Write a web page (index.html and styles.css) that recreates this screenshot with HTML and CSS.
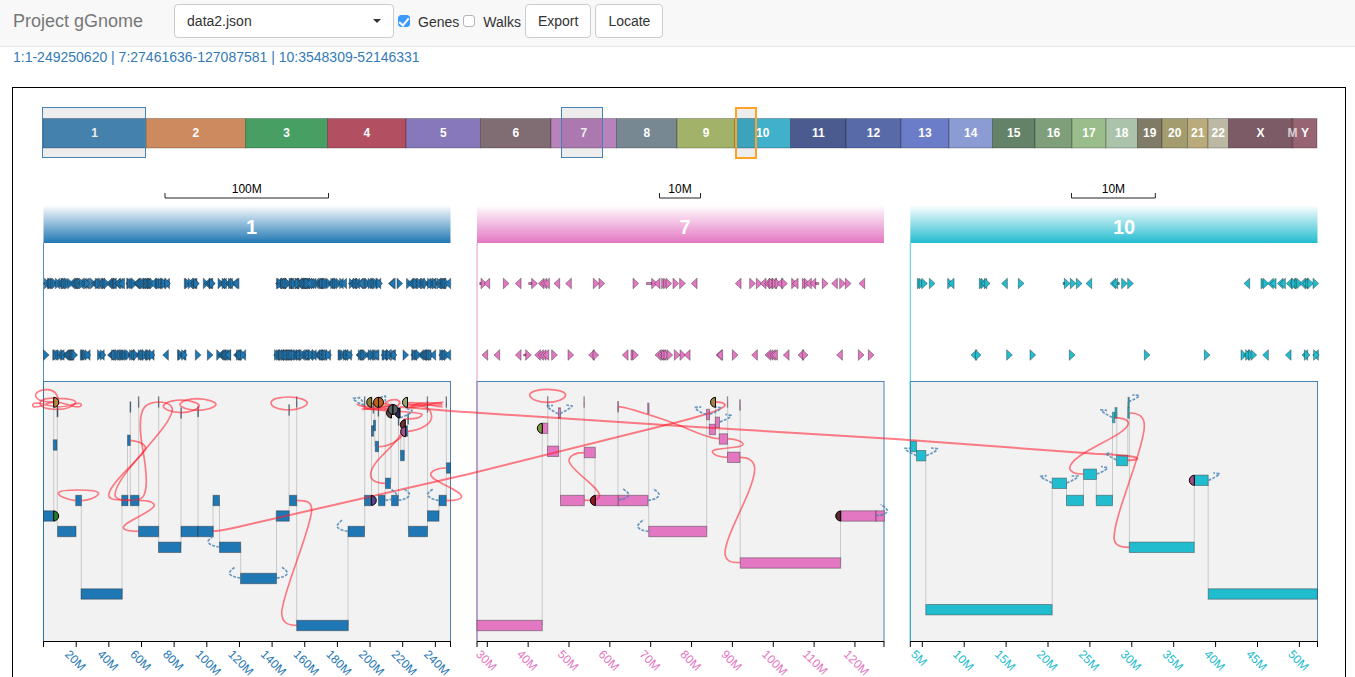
FILE: index.html
```html
<!DOCTYPE html>
<html lang="en">
<head>
<meta charset="utf-8">
<title>Project gGnome</title>
<link rel="stylesheet" href="styles.css">
</head>
<body>
<header class="navbar">
  <a class="brand" href="#">Project gGnome</a>
  <form class="controls">
    <div class="picker">
      <select class="picker-select" aria-label="Data file"><option>data2.json</option></select>
    </div>
    <label class="check"><input class="check-box" type="checkbox" checked>Genes</label>
    <label class="check"><input class="check-box" type="checkbox">Walks</label>
    <button class="btn" type="button">Export</button>
    <button class="btn" type="button">Locate</button>
  </form>
</header>
<main class="content">
  <div class="location"><a class="location-link" href="#">1:1-249250620 | 7:27461636-127087581 | 10:3548309-52146331</a></div>
  <section class="plot">
    <svg class="chart" id="chart" viewBox="13 88 1332 589" preserveAspectRatio="xMinYMin meet" role="img" aria-label="Genome graph">
      <defs>
        <linearGradient id="grad0" x1="0" y1="0" x2="0" y2="1"><stop offset="0" stop-color="#fff"/><stop offset="1" stop-color="#1f77b4"/></linearGradient>
        <linearGradient id="grad1" x1="0" y1="0" x2="0" y2="1"><stop offset="0" stop-color="#fff"/><stop offset="1" stop-color="#e377c2"/></linearGradient>
        <linearGradient id="grad2" x1="0" y1="0" x2="0" y2="1"><stop offset="0" stop-color="#fff"/><stop offset="1" stop-color="#22bccf"/></linearGradient>
      </defs>
    </svg>
  </section>
</main>
<script src="chart.js"></script>
</body>
</html>
```

FILE: styles.css
```css
* { box-sizing: border-box; }
body {
  margin: 0;
  height: 100vh;
  display: flex;
  flex-direction: column;
  overflow: hidden;
  background: #fff;
  color: #333;
  font: 14px/20px "Liberation Sans", Arial, sans-serif;
}
a { text-decoration: none; }
.navbar {
  flex: none;
  display: flex;
  align-items: flex-start;
  padding: 4px 13px 8px;
  gap: 31px;
  background: #f8f8f8;
  border-bottom: 1px solid #e7e7e7;
}
.brand { color: #777; font-size: 18px; line-height: 34px; }
.controls { display: flex; align-items: center; gap: 4px; margin: 0; }
.picker { position: relative; width: 220px; }
.picker::after {
  content: "";
  position: absolute;
  right: 13px;
  top: 15px;
  border: 4px solid transparent;
  border-top-color: #333;
  border-bottom: 0;
  pointer-events: none;
}
.picker-select {
  appearance: none;
  display: block;
  width: 100%;
  height: 34px;
  padding: 0 12px;
  border: 1px solid #ccc;
  border-radius: 4px;
  background: #fff;
  color: #333;
  font: inherit;
}
.check { display: flex; align-items: center; gap: 8px; padding-top: 2px; }
.check-box {
  appearance: none;
  width: 12px;
  height: 12px;
  margin: 0 0 2px;
  border: 1px solid #b5b5b5;
  border-radius: 3px;
  background: #fff;
}
.check-box:checked {
  border-color: #3b99fc;
  background: #3b99fc;
  display: grid;
  place-items: center;
}
.check-box:checked::before {
  content: "";
  width: 4px;
  height: 8px;
  margin-bottom: 2px;
  border: solid #fff;
  border-width: 0 2px 2px 0;
  transform: rotate(40deg);
}
.btn {
  height: 34px;
  padding: 0 12px;
  border: 1px solid #ccc;
  border-radius: 4px;
  background: #fff;
  color: #333;
  font: inherit;
}
.content {
  flex: 1;
  min-height: 0;
  display: flex;
  flex-direction: column;
  padding: 0 9px 0 12px;
}
.location { height: 40px; flex: none; padding-left: 1px; }
.location-link { color: #337ab7; }
.plot {
  flex: 1;
  min-height: 0;
  border: 1px solid #000;
  border-bottom: 0;
  overflow: hidden;
}
.chart { display: block; width: 100%; font-family: "Liberation Sans", Arial, sans-serif; font-size: 12px; }
.band { stroke: #000; stroke-opacity: .25; }
.band-name { fill: #fff; font-weight: bold; text-anchor: middle; }
.brush { fill: #000; fill-opacity: .07; stroke: #4682b4; }
.brush-active { stroke: #ffa226; stroke-width: 2; }
.scale-line { fill: none; stroke: #222; }
.scale-text { fill: #000; text-anchor: middle; }
.title { fill: #fff; font-size: 20px; font-weight: bold; }
.panel { fill: #f2f2f2; stroke: #4682b4; }
.axis { fill: none; stroke: #000; }
.drop { stroke: #000; stroke-opacity: .17; }
.block { stroke: #222; stroke-opacity: .4; }
.gene { stroke: #222; stroke-opacity: .4; }
.cap { stroke: #000; }
.red { fill: none; stroke: #ff2030; stroke-opacity: .58; stroke-width: 5; }
.red-long { fill: none; stroke: #ff2030; stroke-opacity: .58; stroke-width: 2; }
.loose { fill: none; stroke: #4682b4; stroke-opacity: .8; stroke-width: 5; stroke-dasharray: 9 4; }
```

FILE: chart.js
```js
const NS = "http://www.w3.org/2000/svg";
const chart = document.getElementById("chart");
function add(tag, attrs, text, parent = chart) {
  const el = document.createElementNS(NS, tag);
  for (const k in attrs) el.setAttribute(k, attrs[k]);
  if (text) el.textContent = text;
  parent.appendChild(el);
  return el;
}

/* chromosome overview */
const bounds = [43,146,245.5,327.5,406,480.5,551,616.5,677,735,790.5,846,901,949,992.5,1035,1072,1106,1137.5,1162,1187.5,1208,1228.5,1292.3,1292.8,1317];
const names = "1 2 3 4 5 6 7 8 9 10 11 12 13 14 15 16 17 18 19 20 21 22 X M Y".split(" ");
const bandColors = "#4b8bbb #cd8a5e #489f64 #b25062 #8778bb #806c73 #b883bd #788893 #a2b268 #41b0cb #4b5b90 #586ba8 #6b7dc8 #8b9bd3 #648268 #7f9e7a #9bbc8b #abc3ab #807b66 #a29c6e #baab7c #bbb8a3 #7c5a66 #cc6666 #966472".split(" ");
names.forEach((n, i) => add("rect", { class: "band", x: bounds[i], y: 118.5, width: bounds[i + 1] - bounds[i], height: 29.5, fill: bandColors[i] }));
names.forEach((n, i) => add("text", { class: "band-name", x: (bounds[i] + bounds[i + 1]) / 2, y: 137, opacity: n === "M" ? .7 : 1 }, n));
add("rect", { class: "brush", x: 42.5, y: 107.5, width: 103, height: 50 });
add("rect", { class: "brush", x: 561.5, y: 107.5, width: 41, height: 50 });
add("rect", { class: "brush brush-active", x: 736, y: 108, width: 20, height: 50 });

/* panels */
const panels = [
  { name: "1", color: "#1f77b4", x0: 43.5, x1: 450.5, s0: 165, s1: 328.5, scale: "100M", t0: 76.2, step: 32.65, v0: 20, dv: 20, n: 12 },
  { name: "7", color: "#e377c2", x0: 477, x1: 884, s0: 659.5, s1: 700.5, scale: "10M", t0: 487.3, step: 40.85, v0: 30, dv: 10, n: 10 },
  { name: "10", color: "#22bccf", x0: 910.3, x1: 1317.5, s0: 1071.5, s1: 1155.3, scale: "10M", t0: 922.3, step: 41.9, v0: 5, dv: 5, n: 10 }
];
panels.forEach((p, i) => {
  const mid = (p.x0 + p.x1) / 2;
  add("path", { class: "scale-line", d: `M${p.s0} 193V198H${p.s1}V193` });
  add("text", { class: "scale-text", x: (p.s0 + p.s1) / 2, y: 193 }, p.scale);
  add("rect", { x: p.x0, y: 205, width: p.x1 - p.x0, height: 38, fill: `url(#grad${i})` });
  add("text", { class: "title", x: mid - 1, y: 234 }, p.name);
  add("rect", { class: "panel", x: p.x0, y: 381.5, width: p.x1 - p.x0, height: 260 });
  add("path", { d: `M${p.x0} 243V641`, stroke: p.color, "stroke-opacity": .8 });
  let d = `M${p.x0} 647V641.5H${p.x1}V647`;
  for (let k = 0; k < p.n; k++) {
    const x = p.t0 + k * p.step;
    d += `M${x} 641V647`;
    add("text", { transform: `translate(${x - 12} 655) rotate(45)`, fill: p.color }, p.v0 + k * p.dv + "M");
  }
  add("path", { class: "axis", d });
});

/* genes: three units to the pixel from each row's own origin; L/R is the pointing direction */
function gene(x, dir, y, color, tail) {
  let d = dir === "R" ? `M${x} ${y - 5.3}L${x + 5.7} ${y}L${x} ${y + 5.3}Z` : `M${x + 5.7} ${y - 5.3}L${x} ${y}L${x + 5.7} ${y + 5.3}Z`;
  if (tail) d += dir === "R" ? `M${x - tail} ${y - 1}H${x}V${y + 1}H${x - tail}Z` : `M${x + 5.7} ${y - 1}H${x + 5.7 + tail}V${y + 1}H${x + 5.7}Z`;
  add("path", { class: "gene", d, fill: color });
}
function genes(list, ox, y, color) {
  list.split(" ").forEach(s => {
    const [pos, tail] = s.slice(1).split("t");
    gene(ox + pos / 3, s[0], y, color, tail / 3 || 0);
  });
}
let seed = 7;
const rnd = () => (seed = (seed * 16807) % 2147483647) / 2147483647;
function dense(ranges, y, color) {
  ranges.forEach(([a, b]) => {
    const span = b - a - 5.7;
    gene(a, rnd() < .5 ? "L" : "R", y, color);
    for (let x = 1; x < span; x += .7 + rnd() * 1.5) gene(a + x, rnd() < .5 ? "L" : "R", y, color);
    if (span > 2) gene(a + span, rnd() < .4 ? "L" : "R", y, color);
  });
}
const [blue, pink, teal] = panels.map(p => p.color);
dense([[43.5,90],[90.5,124.5],[125.7,156],[155,170.5],[184.3,199.3],[203.3,215.3],[218,239],[275.5,346.5],[280,312],[348.3,363.5],[364,382.5],[388.5,396],[397,403.7],[406.5,450.7]], 283.5, blue);
dense([[43.5,50],[52.7,77.7],[80.3,90.7],[97.5,106],[107.5,155],[177.5,187.3],[216.7,230.7],[233.5,246],[273.5,300],[278,331.5],[338,352.7],[356,379],[381,397],[410.7,435.7],[438.7,450.7]], 355, blue);
genes("L398 R496 R532 R1119", 30, 355, blue);
genes("R48t4 L57 R115 L151 R200t9 L220 L228 L236 L267 L302 R385 R402 R504 R560t16 L568 R590 R596 R603 R624 R644 L679 L811 R854 R874 L886 L898 L905 R912 L918 R922 R930 L936 R950 R980 L982 R1012 R1018 L1022 L1035t9 R1072 L1100 R1124 R1141 L1182", 465, 283.5, pink);
genes("L51 L87 L151 R182t6 L209 L218 L226 L234 R260 R309 L371 R384 L472 R498 R503 L570 L578 L586 R590 R597 R606 R628 R645 L658 L753 L756 R802 L860 L900 L907 L914 L920 L955 L999 R1012 L1115 R1180 R1210", 465, 355, pink);
genes("R67 R72 R80 R103 R158 L160 R253 R258 L258 R268 L320 R370 R508t4 R526 R544 L573 L645 L651t5 R680 R698 L1047 R1098 R1104 L1118 L1126 L1147 L1154 L1174 L1184 R1190 R1200 R1205 L1214 L1222 R1232 R1238 R1254", 895, 283.5, teal);
genes("L228 R241 R335 R405 R523 R748 R928 R1038 L1046 R1052 R1060 R1068 L1103 L1171 L1221 R1228 L1253 R1256", 895, 355, teal);

/* neighbouring segments are joined by vertical lines: [x, top, bottom] */
[[53.7,402,516],[57.3,411,526],[81.3,505,589],[122,500,594],[127.5,446,500],[130.3,402,495],[138.7,402,526],[158.7,402,547],[181,413,547],[198,411,531],[213,500,531],[219.5,500,547],[240.7,547,573],[276.5,516,578],[289,415,516],[296.7,402,625],[348,531,625],[364.7,402,531],[371.5,402,500],[374.7,402,446],[378.5,402,500],[385.3,402,500],[391,402,483],[398.5,402,500],[400.7,425,455],[404,432,455],[408.3,431,531],[427.5,402,531],[439,500,516],[446.3,402,500],
[542.2,428,625],[547.8,402,451],[558.5,413,451],[560.5,413,500],[584.2,402,500],[595,452,500],[618,406,500],[648.7,408,531],[706.7,414,531],[709.5,414,430],[715.5,402,429],[719.3,422,439],[727.7,402,457],[740.2,405,563],[840.5,516,563],
[925.8,461,604],[1052.2,489,604],[1066.5,483,500],[1083.5,480,500],[1096.3,480,500],[1112.5,423,500],[1116.8,412,455],[1127.8,402,460],[1129.4,413,547],[1194.3,480,542],[1208.2,480,589]
].forEach(([x, a, b]) => add("path", { class: "drop", d: `M${x} ${a}V${b}` }));

/* segments: [x start, x end, y centre] */
const blocks = [
[[43.5,54,516],[53.3,57,445],[57,58,411.5],[57.5,76,531.5],[75.7,81.5,500.5],[81,122.3,594],[121.7,128,500.5],[127.5,130.3,440.3],[130.3,139,500.5],[130,130.7,407],[138.4,138.9,402],[138.5,158.7,531.5],[158.4,158.9,402],[158.5,181,547.3],[180.8,181.4,413],[181,198,531.5],[198,213.3,531.5],[197.8,198.4,411.5],[213,219.5,500.5],[219.5,240.7,547.3],[240.5,276.5,578.5],[276.3,289.3,516],[288.8,289.4,410],[289.5,296.7,500.5],[296.5,297,402],[296.7,348.3,625.5],[348,364.5,531.5],[364.5,370.7,500.5],[364.5,365,402],[371.5,373.5,431],[373.5,375.5,425.5],[373,373.7,408],[375.3,378.5,446.5],[378.5,385,500.5],[378,378.7,411],[385.5,390.5,483.3],[391.5,398.3,500.5],[400.5,404.3,455.5],[405.7,407.5,431],[407.7,408.5,419],[398.3,399,420],[408.5,427.5,531.5],[427.2,427.6,402],[427.2,427.6,407],[427.5,439,516],[439,446.3,500.5],[446,446.5,402],[446.5,450.5,468]],
[[477,542.3,625.5],[542.3,547.7,428.3],[547.5,548,402],[547.5,558.7,451.3],[558.5,560.5,413],[560.5,584.3,500.5],[583.9,584.3,402],[584.3,595.3,452.5],[595.3,618.3,500.5],[618.3,648,500.5],[617.7,618.5,406.7],[647.7,649,408.3],[648.7,706.8,531.5],[706.5,709.5,414.5],[709.3,715.5,429.5],[715.3,719.5,422.3],[719.3,727.5,439],[727.3,727.7,402],[727.5,740,457.3],[739.7,740.3,405],[740.3,840.7,563],[840.7,876,516],[876,884.3,516]],
[[910.5,916.5,446.5],[916.5,925.8,455.7],[925.8,1052.2,609.7],[1052.2,1066.5,483.3],[1066.5,1083.5,500.5],[1083.5,1096.5,474.3],[1096.3,1112.5,500.5],[1112.5,1114.8,417.5],[1115,1117,412.8],[1116.5,1127.7,460.5],[1128,1129.3,402.5],[1127.8,1129.3,413],[1129.3,1194.3,547.3],[1194.3,1208.2,480.3],[1208.2,1317.3,594]]];
blocks.forEach((list, i) => list.forEach(([a, b, y]) => add("rect", { class: "block", x: a, y: y - 5.2, width: b - a, height: 10.4, fill: panels[i].color })));

/* links: coordinates are three units to the pixel from the given origin */
function curves(ox, list, cls) {
  const g = add("g", { transform: `translate(${ox} 375) scale(.33333)` });
  list.forEach(d => add("path", { class: cls, d }, "", g));
}
curves(30, [
"M85 88C88 55 68 42 48 44C15 47 8 64 28 75C45 83 70 80 85 81",
"M30 85C30 70 60 68 83 70C115 70 138 75 137 83C130 92 115 103 83 103C50 103 32 97 30 85Z",
"M8 90C8 82 25 82 50 90C90 100 110 96 130 88C150 82 155 86 154 91C150 98 135 97 110 88C80 78 60 80 40 90C20 98 8 98 8 90",
"M136 377C115 374 85 365 85 354C90 342 200 342 206 354C205 367 170 377 155 377",
"M301 196C320 198 345 205 347 220C345 240 240 320 236 360C236 375 260 376 301 376",
"M386 81C415 82 427 90 427 105C423 160 255 300 255 360C256 372 270 376 301 376",
"M386 81C345 82 331 100 331 150C330 210 349 250 349 320C348 370 335 376 301 376",
"M327 376C350 376 372 380 373 392C370 410 280 440 280 458C282 468 305 469 325 469",
"M453 113C425 112 400 103 400 93C405 80 435 75 455 75C480 76 505 83 508 92C505 103 480 113 453 113",
"M504 106C475 105 450 98 450 88C455 75 485 71 504 71C530 72 556 80 558 88C555 98 530 106 504 106"], "red");
curves(240, [
"M147 105C115 105 93 95 93 83C95 70 125 66 147 66C175 66 200 75 202 83C200 95 175 105 147 105",
"M170 376C200 376 215 380 215 405C214 460 125 660 125 715C127 745 145 751 170 751",
"M416 215C440 215 480 200 495 170","M436 325C405 324 390 315 392 295C398 255 460 220 484 175",
"M504 169C545 165 575 145 575 125C573 100 560 88 500 88",
"M490 132C530 133 546 127 546 118C530 108 460 112 370 100","M350 88C380 103 430 92 480 108","M365 93C390 105 410 105 450 90",
"M365 103C400 98 430 108 480 100","M380 90C410 82 440 84 470 95","M436 85C450 70 480 70 480 85C475 95 450 97 420 92",
"M500 84C530 78 580 95 608 96","M500 97C540 100 580 80 610 82","M505 90L608 90","M512 97C530 82 550 82 606 85",
"M619 279C590 278 572 290 572 299C575 320 665 345 665 365C663 376 640 377 619 377"], "red");
curves(465, [
"M248 82C220 82 195 72 194 60C196 48 225 43 248 43C275 43 301 50 302 60C300 72 275 82 248 82",
"M357 233C330 233 312 243 312 258C315 285 402 335 404 362C402 374 392 376 357 376",
"M460 95C480 95 540 115 600 135L648 153C690 170 730 190 762 191"], "red");
curves(680, ["M143 191C170 193 190 200 189 209C186 220 98 218 97 230C100 242 125 247 142 247","M180 247C210 247 225 260 224 285C220 350 135 480 135 535C137 560 155 563 180 563"], "red");
curves(895, ["M660 128C690 129 702 138 700 147C690 185 525 235 524 280C526 293 545 297 565 297","M704 114C735 114 749 128 748 155C745 230 657 420 657 490C660 512 675 517 703 517"], "red");
add("path", { class: "red-long", d: "M213 531.3C225 530.5 232 528.5 240 526.5L470 473.7L680 421.5C705 415 725 409 725 405C724 402 719 402 715.7 402" });
add("path", { class: "red-long", d: "M400 407C420 408 440 411 470 412.3L680 426L895 439L1095 453.7C1125 455 1140 457 1137 459C1135 460 1131 460.3 1127.7 460.3" });

curves(30, ["M568 516C550 514 533 508 535 497C540 490 547 486 550 482","M631 609C615 607 598 602 598 593C603 584 610 580 617 575"], "loose");
curves(240, ["M110 609C125 608 143 602 142 593C138 584 130 580 124 575","M323 469C305 466 290 460 291 452C296 443 303 438 308 434","M436 376C455 374 470 368 469 357C464 350 457 345 452 342","M475 376C495 374 510 366 508 356C502 348 495 344 490 341","M596 376C578 374 563 366 563 357C568 349 575 345 581 341","M373 90C355 85 340 75 340 70L358 68L374 86","M400 85C415 72 425 63 436 63L436 80","M480 128C500 122 518 112 516 106L498 100"], "loose");
curves(465, ["M280 116C265 110 247 98 247 93L264 91","M285 116C300 108 320 98 321 93L304 90","M460 375C480 372 493 366 491 358C488 350 478 345 473 341","M549 376C570 374 584 366 582 357C578 350 570 345 564 341","M551 469C535 468 518 462 518 453C522 444 530 438 537 434"], "loose");
curves(680, ["M79 118C65 115 45 103 46 97L64 96","M89 118C105 112 122 105 122 98L107 96","M119 141C135 135 152 128 153 121L136 118","M588 422C610 420 623 415 622 406C618 398 608 392 602 388"], "loose");
curves(895, ["M64 242C50 235 30 226 30 220L48 220","M93 242C110 235 127 228 127 221L108 219","M471 324C455 315 437 308 437 304L455 302","M515 324C535 315 550 308 549 303L530 303","M605 297C625 290 638 282 637 278L618 274","M664 254C650 248 632 238 633 235L650 235","M652 127C635 120 618 108 618 105L636 106","M700 80C715 75 733 66 732 61L712 60","M940 316C955 310 973 300 973 296L955 294"], "loose");

/* half-disc markers: [flat edge x, y, rounded side, fill] */
[[53.7,402.3,1,"#b58a45"],[53.7,516,1,"#277a27"],[371.7,402.3,0,"#8e7f35"],[378.5,402.3,0,"#b8651c"],[378.5,402.3,1,"#c06018"],[407.5,402.3,0,"#94a56e"],[400,413,0,"#2b2d5a"],[391.5,413,0,"#6b4040"],[393,409.5,0,"#5a5f60"],[393,409.5,1,"#5a5f60"],[405.3,424.7,0,"#702c30"],[405.7,431.7,0,"#a85090"],[371.3,500.5,1,"#604090"],
[542.3,428.3,0,"#7a9440"],[595.3,500.5,0,"#8c1a22"],[715.5,402.3,0,"#a88040"],[840.7,516,0,"#5c2830"],[1194.3,480.3,0,"#a04a85"]
].forEach(([x, y, side, fill]) => add("path", { class: "cap", d: `M${x} ${y - 5}A5 5 0 0 ${side} ${x} ${y + 5}Z`, fill }));
```
